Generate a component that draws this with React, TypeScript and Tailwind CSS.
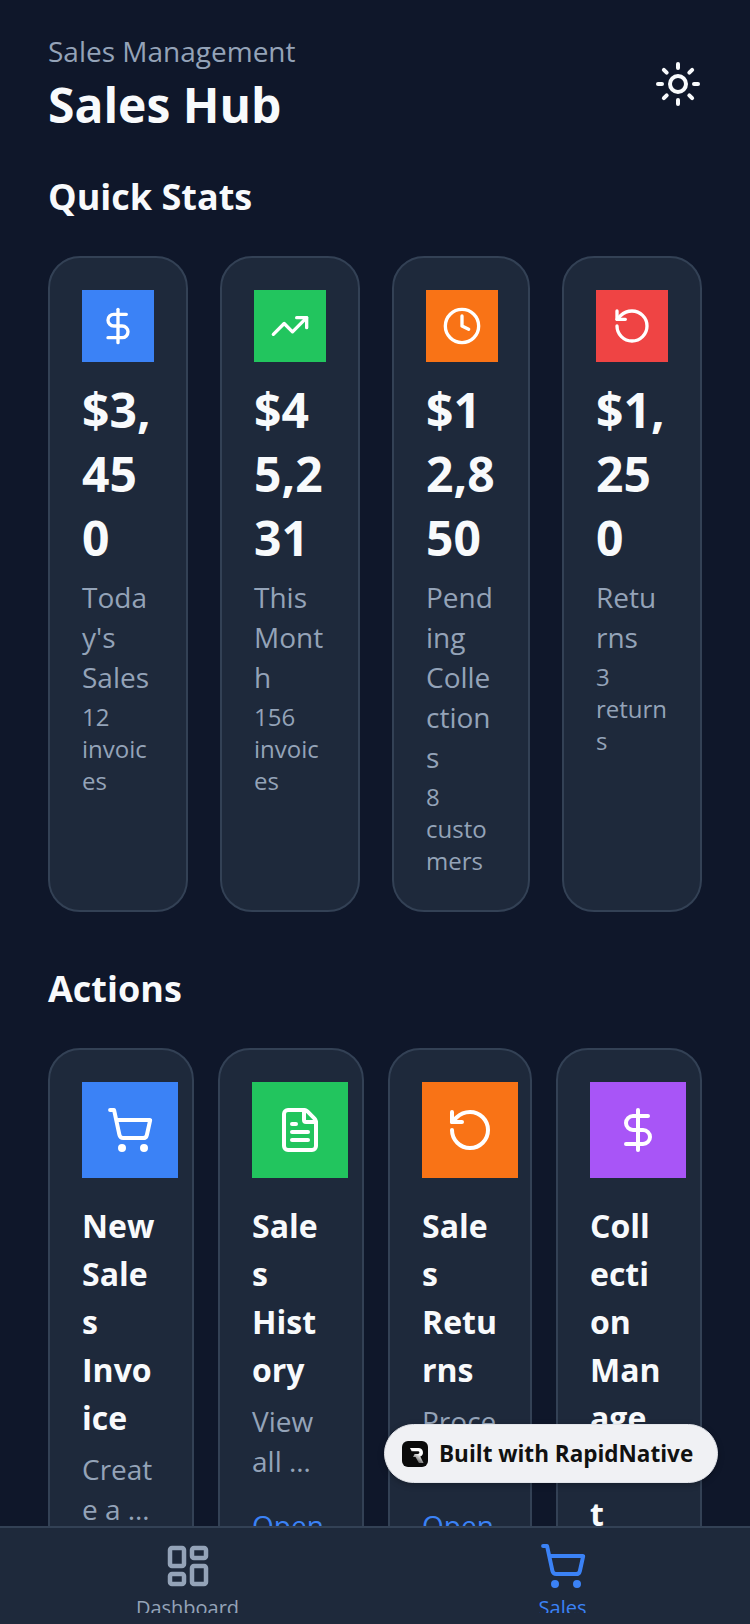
import React from 'react';
import {
  Clock,
  DollarSign,
  FileText,
  LayoutDashboard,
  RotateCcw,
  ShoppingCart,
  Sun,
  TrendingUp,
} from 'lucide-react';

const STATS = [
  { icon: DollarSign, bg: 'bg-[#3b82f6]', width: 'w-[140px]', value: '$3,450', label: "Today's Sales", sub: '12 invoices' },
  { icon: TrendingUp, bg: 'bg-[#22c55e]', width: 'w-[140px]', value: '$45,231', label: 'This Month', sub: '156 invoices' },
  { icon: Clock, bg: 'bg-[#f97316]', width: 'w-[138px]', value: '$12,850', label: 'Pending Collections', sub: '8 customers' },
  { icon: RotateCcw, bg: 'bg-[#ef4444]', width: 'w-[140px] pr-[32.5px]', value: '$1,250', label: 'Returns', sub: '3 returns' },
];

const ACTIONS = [
  { icon: ShoppingCart, bg: 'bg-[#3b82f6]', width: 'w-[146px]', title: 'New Sales Invoice', desc: 'Create a …' },
  { icon: FileText, bg: 'bg-[#22c55e]', width: 'w-[146px]', title: 'Sales History', desc: 'View all …' },
  { icon: RotateCcw, bg: 'bg-[#f97316]', width: 'w-[144px]', title: 'Sales Returns', desc: 'Process …' },
  { icon: DollarSign, bg: 'bg-[#a855f7]', width: 'w-[146px]', title: 'Collection Management', desc: 'Track …' },
];

const App = () => {
  return (
    <div className="relative flex h-[1624px] flex-col overflow-hidden bg-[#0f172a] font-['Open_Sans',sans-serif] [overflow-wrap:anywhere]">
      <main className="min-h-0 flex-1 overflow-hidden px-12 pt-[31px]">
        <header className="flex items-center justify-between">
          <div>
            <p className="text-[28px] leading-10 text-[#94a3b8]">Sales Management</p>
            <h1 className="mt-[2px] text-[48px] leading-16 font-bold text-[#f8fafc]">Sales Hub</h1>
          </div>
          <Sun size={48} className="text-[#f8fafc]" />
        </header>

        <h2 className="mt-8 text-[36px] leading-14 font-bold text-[#f8fafc]">Quick Stats</h2>
        <div className="mt-[31px] flex gap-8">
          {STATS.map((stat) => (
            <div key={stat.label} className={`rounded-[32px] border-2 border-[#334155] bg-[#1e293b] px-8 pt-8 pb-[33px] ${stat.width}`}>
              <div className={`${stat.bg} mb-4 flex h-[72px] w-[72px] items-center justify-center`}>
                <stat.icon size={40} className="text-white" />
              </div>
              <p className="text-[48px] leading-16 font-bold text-[#f8fafc]">{stat.value}</p>
              <p className="mt-[7px] text-[28px] leading-10 text-[#94a3b8]">{stat.label}</p>
              <p className="mt-1 text-2xl leading-8 text-[#94a3b8]">{stat.sub}</p>
            </div>
          ))}
        </div>

        <h2 className="mt-[49px] text-[36px] leading-14 font-bold text-[#f8fafc]">Actions</h2>
        <div className="mt-[31px] flex gap-6">
          {ACTIONS.map((action) => (
            <div key={action.title} className={`${action.width} rounded-[32px] border-2 border-[#334155] bg-[#1e293b] p-8`}>
              <div className={`${action.bg} mb-6 flex h-24 w-24 items-center justify-center`}>
                <action.icon size={48} className="text-white" />
              </div>
              <p className="text-[32px] leading-12 font-bold text-[#f8fafc]">{action.title}</p>
              <p className="mt-[7px] text-[28px] leading-10 text-[#94a3b8]">{action.desc}</p>
              <p className="mt-6 text-[28px] leading-10 text-[#3b82f6]">Open</p>
            </div>
          ))}
        </div>
      </main>

      <nav className="flex h-[98px] shrink-0 border-t-2 border-[#334155] bg-[#1e293b] pt-[14px]">
        <div className="flex flex-1 flex-col items-center text-[#94a3b8]">
          <LayoutDashboard size={48} strokeWidth={2.25} />
          <span className="mt-1 h-[19px] overflow-hidden text-xl leading-7">Dashboard</span>
        </div>
        <div className="flex flex-1 flex-col items-center text-[#3b82f6]">
          <ShoppingCart size={48} />
          <span className="mt-1 h-[19px] overflow-hidden text-xl leading-7">Sales</span>
        </div>
      </nav>

      <div className="absolute top-[1424px] right-8 flex h-[59px] w-[334px] items-center gap-[11px] rounded-full border border-[#e3e5ea] bg-[#f0f1f4] pl-[17px] shadow-[0_2px_6px_rgba(0,0,0,0.25)]">
        <svg width="26" height="26" viewBox="0 0 26 26">
          <defs>
            <linearGradient id="logo-fade" x1="0.1" y1="1" x2="0.5" y2="0.3">
              <stop offset="0" stopColor="#0b0b0b" />
              <stop offset="1" stopColor="#fff" />
            </linearGradient>
          </defs>
          <rect width="26" height="26" rx="6" fill="#0b0b0b" />
          <path d="M8 7h8.5a4.5 4.5 0 0 1 1.8 8.6L21.5 22h-4.6l-3.4-6H11l1.6-3h3.4a1.4 1.4 0 0 0 0-2.8h-6.4z" fill="url(#logo-fade)" />
        </svg>
        <span className="text-[22.5px] font-bold whitespace-nowrap text-[#111]">Built with RapidNative</span>
      </div>
    </div>
  );
};

export default App;
